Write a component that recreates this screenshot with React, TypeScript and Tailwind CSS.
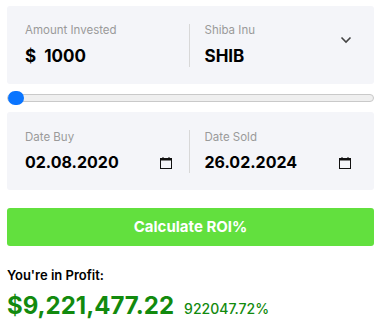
import { useState } from "react";

const font = { fontFamily: "Inter, 'Open Sans', sans-serif" };

const CalendarIcon = () => (
  <svg width="14" height="14" viewBox="0 0 14 14" fill="none">
    <rect x="1.5" y="2.5" width="11" height="10" stroke="#111" strokeWidth="1" />
    <rect x="1.5" y="2" width="11" height="2.5" fill="#111" />
    <rect x="3.5" y="1" width="1" height="2" fill="#111" />
    <rect x="9.5" y="1" width="1" height="2" fill="#111" />
  </svg>
);

const Field: React.FC<{ label: string; value: string; icon?: React.ReactNode }> = ({ label, value, icon }) => (
  <div className="flex-1 flex items-end justify-between">
    <div>
      <div className="text-[11.5px] text-[#9a9a9a] leading-none mb-[11px]">{label}</div>
      <div className="text-[16px] font-bold text-black leading-none">{value}</div>
    </div>
    {icon}
  </div>
);

export default function App() {
  const [amount] = useState(1000);

  return (
    <div className="w-[381px] h-[325px] bg-white px-[7px] pt-[6px]" style={font}>
      <div className="bg-[#f4f5f9] rounded-[3px] h-[78px] flex items-center px-[18px]">
        <div className="flex-1 pr-4">
          <div className="text-[11.5px] text-[#9a9a9a] leading-none mb-[11px]">Amount Invested</div>
          <div className="text-[17px] font-bold text-black leading-none">$&nbsp;&nbsp;{amount}</div>
        </div>
        <div className="w-px h-[43px] bg-[#d8d8d8]" />
        <div className="flex-1 pl-[15px] flex items-center justify-between pr-[4px]">
          <div>
            <div className="text-[11.5px] text-[#9a9a9a] leading-none mb-[11px]">Shiba Inu</div>
            <div className="text-[17px] font-bold text-black leading-none">SHIB</div>
          </div>
          <svg width="12" height="8" viewBox="0 0 12 8" className="-mt-[10px]">
            <path d="M1.5 1.5 L6 6 L10.5 1.5" stroke="#444" strokeWidth="1.6" fill="none" />
          </svg>
        </div>
      </div>

      <div className="h-[28px] flex items-center">
        <div className="relative w-full h-[8px] rounded-full bg-[#efefef] border border-[#c9c9c9]">
          <div className="absolute left-[0px] top-1/2 -translate-y-1/2 w-[16px] h-[14px] rounded-full bg-[#0a75ff]" />
        </div>
      </div>

      <div className="bg-[#f4f5f9] rounded-[3px] h-[78px] flex items-center px-[18px]">
        <div className="flex-1 flex items-center pr-[16px]">
          <Field label="Date Buy" value="02.08.2020" icon={<CalendarIcon />} />
        </div>
        <div className="w-px h-[43px] bg-[#d8d8d8]" />
        <div className="flex-1 flex items-center pl-[15px] pr-[4px]">
          <Field label="Date Sold" value="26.02.2024" icon={<CalendarIcon />} />
        </div>
      </div>

      <button className="mt-[18px] w-full h-[38px] rounded-[3px] bg-[#62e03e] text-white font-bold text-[15px]">
        Calculate ROI%
      </button>

      <div className="mt-[20px] text-[13px] font-semibold text-black">You're in Profit:</div>
      <div className="mt-[8px] flex items-baseline gap-[10px] text-[#128a0e]">
        <span className="text-[24px] font-bold leading-none">$9,221,477.22</span>
        <span className="text-[14px] font-medium">922047.72%</span>
      </div>
    </div>
  );
}
